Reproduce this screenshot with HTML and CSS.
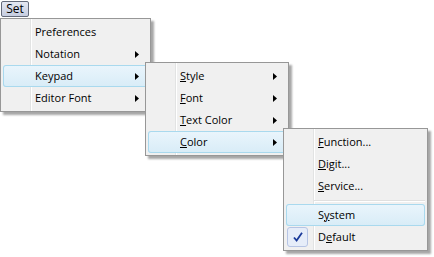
FILE: index.html
```html
<!doctype html>
<html lang="en">
<head>
    <meta charset="UTF-8">
    <title>Set menu</title>
    <link rel="stylesheet" href="styles.css">
</head>
<body>
    <div class="menubar">
        <span class="menubtn">Set</span>
    </div>
    <ul class="menu menu-main">
        <li class="item">Preferences</li>
        <li class="item sub">Notation</li>
        <li class="item sub hot">Keypad
            <ul class="menu menu-keypad">
                <li class="item sub"><u>S</u>tyle</li>
                <li class="item sub"><u>F</u>ont</li>
                <li class="item sub"><u>T</u>ext Color</li>
                <li class="item sub hot"><u>C</u>olor
                    <ul class="menu menu-color">
                        <li class="item"><u>F</u>unction...</li>
                        <li class="item"><u>D</u>igit...</li>
                        <li class="item"><u>S</u>ervice...</li>
                        <li class="sep"></li>
                        <li class="item hot">S<u>y</u>stem</li>
                        <li class="item checked">
                            <span class="checkbox">
                                <svg width="12" height="12" viewBox="0 0 12 12">
                                    <path d="M2 6.5 L4.6 9.6 L10 1.8" fill="none" stroke="#1b3a9a" stroke-width="1.8"/>
                                </svg>
                            </span>
                            D<u>e</u>fault
                        </li>
                    </ul>
                </li>
            </ul>
        </li>
        <li class="item sub">Editor Font</li>
    </ul>
</body>
</html>
```

FILE: styles.css
```css
/* reset */
*{
    margin: 0;
    padding: 0;
    box-sizing: border-box;
}
ul{
    list-style: none;
}
body{
    min-height: 257px;
    background: #ffffff;
    font-family: "Segoe UI", "Open Sans", sans-serif;
    font-size: 11px;
    color: #000000;
}

.menubar{
    height: 18px;
}
.menubtn{
    display: inline-block;
    margin: 1px 0 0 1px;
    width: 28px;
    height: 16px;
    line-height: 14px;
    font-size: 12px;
    text-align: center;
    border: 1px solid #636a7a;
    border-radius: 2px;
    background: linear-gradient(#e4e8f2, #c6cde0);
}

/* popup menus */
.menu{
    padding: 2px;
    border: 1px solid #979797;
    background-color: #f0f0f0;
    background-image: linear-gradient(to right, transparent 29px, #e2e3e3 29px, #e2e3e3 30px, #ffffff 30px, #ffffff 31px, transparent 31px);
    box-shadow: 3px 3px 2px rgba(0, 0, 0, 0.35);
}
.menu-main{
    position: relative;
    width: 151px;
}
.menu-keypad,
.menu-color{
    position: absolute;
    top: -3px;
    left: calc(100% - 3px);
    z-index: 1;
}
.menu-keypad{
    width: 144px;
}
.menu-color{
    width: 145px;
}

.item{
    position: relative;
    height: 22px;
    line-height: 21px;
    padding-left: 32px;
    white-space: nowrap;
}
.item u{
    text-underline-offset: 1px;
}
.sub::after{
    content: "";
    position: absolute;
    right: 9px;
    top: 8px;
    width: 4px;
    height: 7px;
    background: #000000;
    clip-path: polygon(0 0, 100% 50%, 0 100%);
}
.hot{
    border-radius: 3px;
    box-shadow: inset 0 0 0 1px #a9d9ee;
    background: linear-gradient(#eaf5fc, #d8ecf7);
}

.sep{
    height: 7px;
    margin-left: 28px;
    background-image: linear-gradient(transparent 3px, #e0e0e0 3px, #e0e0e0 4px, #ffffff 4px, #ffffff 5px, transparent 5px);
}

.checkbox{
    position: absolute;
    left: 1px;
    top: 1px;
    width: 21px;
    height: 20px;
    border: 1px solid #b6c4e4;
    border-radius: 3px;
    background: #e6edf9;
    display: flex;
    align-items: center;
    justify-content: center;
}
```
